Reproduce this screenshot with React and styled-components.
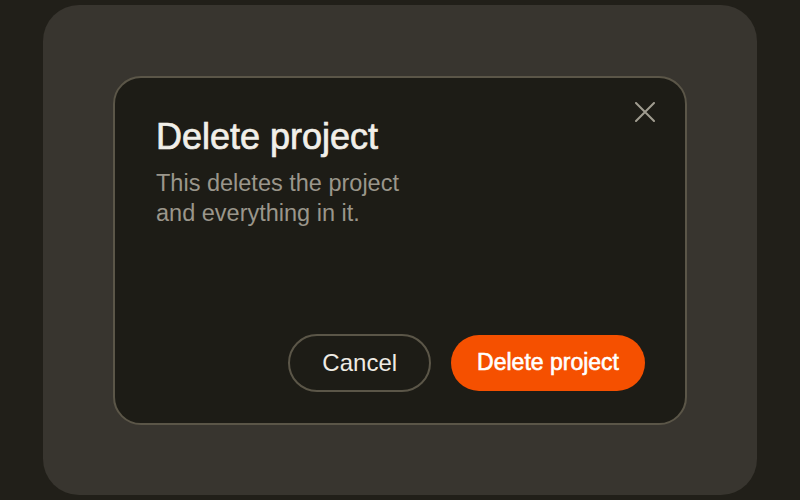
import React from "react";
import styled, { createGlobalStyle } from "styled-components";

const Global = createGlobalStyle`
  html, body { margin: 0; padding: 0; background: #211f19; }
  body { font-family: "Liberation Sans", Arial, sans-serif; }
  * { box-sizing: border-box; }
`;

const Page = styled.div`
  width: 800px;
  height: 500px;
  padding: 5px 43px;
  background: #211f19;
`;

const Panel = styled.div`
  height: 490px;
  border-radius: 36px;
  background: #38352f;
  display: flex;
  align-items: center;
  justify-content: center;
`;

const Dialog = styled.div`
  position: relative;
  width: 574px;
  height: 349px;
  border: 2px solid #5b5648;
  border-radius: 28px;
  background: #1d1c16;
  padding: 37px 40px 31px 41px;
  display: flex;
  flex-direction: column;
`;

const Title = styled.h2`
  margin: 0;
  font-size: 36px;
  line-height: 1.2;
  font-weight: 400;
  color: #f1efe9;
  -webkit-text-stroke: 0.7px #f1efe9;
`;

const Description = styled.p`
  margin: 10px 0 0;
  max-width: 275px;
  font-size: 23.5px;
  line-height: 30px;
  color: #9a968b;
`;

const CloseButton = styled.button`
  position: absolute;
  top: 21px;
  right: 27px;
  width: 26px;
  height: 26px;
  padding: 0;
  border: 0;
  background: transparent;
  display: flex;
  align-items: center;
  justify-content: center;
  cursor: pointer;
`;

const Actions = styled.div`
  margin-top: auto;
  display: flex;
  justify-content: flex-end;
  align-items: center;
  gap: 20px;
`;

const Button = styled.button`
  height: ${(p) => (p.$primary ? "56px" : "58px")};
  padding: 0 ${(p) => (p.$primary ? "26px" : "32px")};
  border-radius: 999px;
  border: ${(p) => (p.$primary ? "0" : "2px solid #5b5648")};
  background: ${(p) => (p.$primary ? "#f55000" : "transparent")};
  color: ${(p) => (p.$primary ? "#ffffff" : "#eeebe4")};
  font-family: "Liberation Sans", Arial, sans-serif;
  font-size: ${(p) => (p.$primary ? "23px" : "24px")};
  font-weight: 400;
  -webkit-text-stroke: ${(p) => (p.$primary ? "0.6px #ffffff" : "0")};
  cursor: pointer;
`;

export default function App() {
  return (
    <>
      <Global />
      <Page>
        <Panel>
          <Dialog>
            <CloseButton aria-label="Close">
              <svg width="20" height="20" viewBox="0 0 20 20">
                <path d="M1 1 L19 19 M19 1 L1 19" stroke="#a09c90" strokeWidth="2" strokeLinecap="round" />
              </svg>
            </CloseButton>
            <Title>Delete project</Title>
            <Description>This deletes the project and everything in it.</Description>
            <Actions>
              <Button>Cancel</Button>
              <Button $primary>Delete project</Button>
            </Actions>
          </Dialog>
        </Panel>
      </Page>
    </>
  );
}
